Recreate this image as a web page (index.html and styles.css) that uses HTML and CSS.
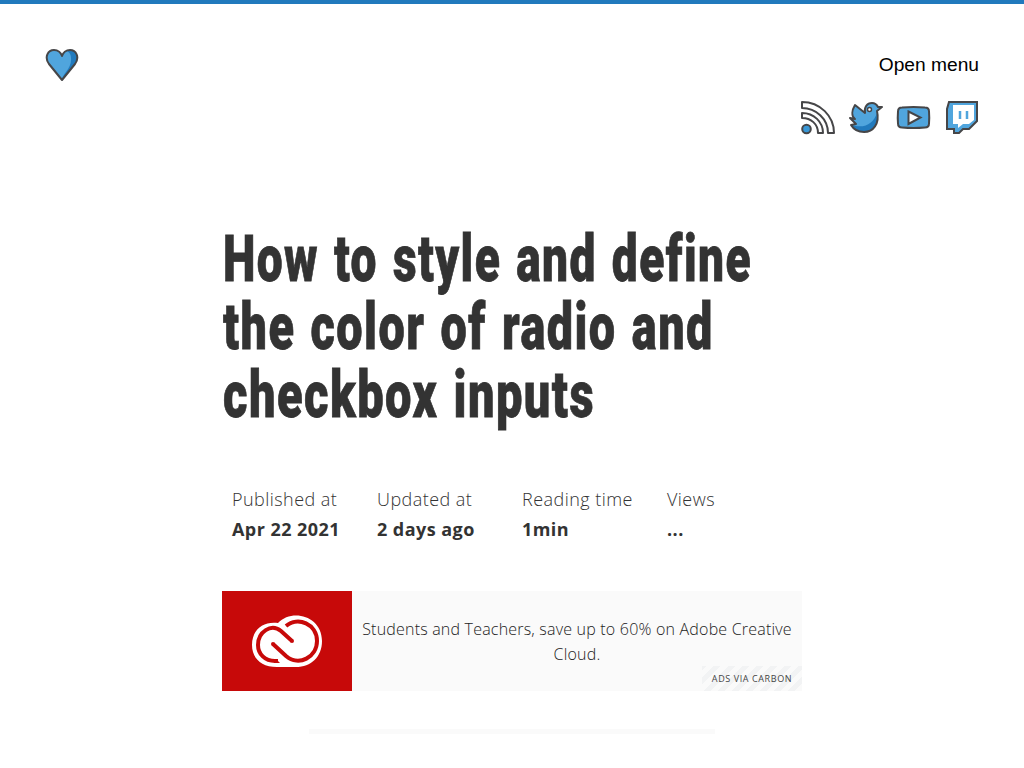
FILE: index.html
```html
<!DOCTYPE html>
<html lang="en">
<head>
<meta charset="utf-8">
<title>How to style and define the color of radio and checkbox inputs</title>
<link rel="stylesheet" href="styles.css">
</head>
<body>
<header class="header">
  <a class="logo" aria-label="Home"><svg width="34" height="34" viewBox="0 0 34 34"><path fill="#50a5dd" d="M17 32 4 16C-1 9 3 2 9 2c4 0 7 3 8 6 1-3 4-6 8-6 6 0 10 7 5 14Z"/><path fill="#217abd" d="M25 2c6 0 10 7 5 14L17 32c0-6 10-11 9-22q0-5-4-7Z"/><path fill="none" stroke="#464648" stroke-width="2" stroke-linejoin="round" d="M17 32 4 16C-1 9 3 2 9 2c4 0 7 3 8 6 1-3 4-6 8-6 6 0 10 7 5 14Z"/></svg></a>
  <div class="tools">
    <button class="menu">Open menu</button>
    <nav class="social">
      <a aria-label="RSS"><svg width="36" height="36" viewBox="0 0 36 36"><g fill="#fff" stroke="#464648" stroke-width="2" stroke-linejoin="round"><path d="M2 2C20 2 34 16 34 33H28C28 19 16 8 2 8Z"/><path d="M2 13C14 13 23 22 23 33H18C18 24 11 18 2 18Z" /><circle cx="6.500" cy="29" r="4.300" fill="#3998d7"/></g></svg></a>
      <a aria-label="Twitter"><svg width="36" height="36" viewBox="0 0 36 36"><path fill="#50a5dd" d="m7 5 10 8C16 7 19 3 24 3c3 0 5 2 6 4h4l-5 4c3 13-4 21-13 21-6 0-10-2-13-7l5-1-6-6 5 1C3 16 4 10 7 5Z"/><path fill="#217abd" d="M29 13c2 11-4 19-13 19-6 0-10-2-13-7 14 4 22-1 26-12Z"/><path fill="none" stroke="#464648" stroke-width="2" stroke-linejoin="round" d="m7 5 10 8C16 7 19 3 24 3c3 0 5 2 6 4h4l-5 4c3 13-4 21-13 21-6 0-10-2-13-7l5-1-6-6 5 1C3 16 4 10 7 5Z"/><circle cx="21.500" cy="9.500" r="2" fill="#fff" stroke="#464648" stroke-width="1.500"/></svg></a>
      <a aria-label="YouTube"><svg width="36" height="36" viewBox="0 0 36 36"><path fill="#50a5dd" stroke="#464648" stroke-width="2" d="M6 7.500q11.500-1 23 0 4 0 4 4 .5 6 0 12 0 4-4 4-11.500 1-23 0-4 0-4-4-.5-6 0-12 0-4 4-4Z"/><path fill="#fff" stroke="#464648" stroke-width="2" d="m12.500 11.500 12 6-12 6.500Z"/></svg></a>
      <a aria-label="Twitch"><svg width="36" height="36" viewBox="0 0 36 36"><path fill="#50a5dd" stroke="#464648" stroke-width="2" d="M5 2H33V21L25 29H19L15 33H10V29H3V9Z"/><path fill="#fff" d="M9 5H30V20L25 24H19L14 28V24H9Z"/><path stroke="#50a5dd" stroke-width="2.500" d="M16 11v8M23 11v8"/></svg></a>
    </nav>
  </div>
</header>
<main class="article">
  <h1 class="title"><span class="line line-a">How to style and define</span><span class="line line-b">the color of radio and</span><span class="line line-c">checkbox inputs</span></h1>
  <dl class="meta">
    <div><dt>Published at</dt><dd>Apr 22 2021</dd></div>
    <div><dt>Updated at</dt><dd>2 days ago</dd></div>
    <div><dt>Reading time</dt><dd>1min</dd></div>
    <div><dt>Views</dt><dd>...</dd></div>
  </dl>
  <aside class="ad">
    <div class="ad-logo"><svg width="70" height="52" viewBox="0 0 70 52"><path fill="#fff" d="M26 8C40-7 70 1 70 26 70 42 59 52 44 52H25C9 52 0 43 0 30 0 14 12 6 26 8Z"/><g fill="none" stroke="#c70909" stroke-width="4"><path d="M34 11C46 1 65 9 65 26 65 42 47 52 34 41L21 29"/><path d="M40 26 29 16C19 8 6 17 6 30c0 9 7 16 17 16h3"/></g><path fill="#c70909" d="M22 44h2L28 48H22Z"/><circle cx="21" cy="29" r="2" fill="#c70909"/><circle cx="40" cy="26" r="2" fill="#c70909"/></svg></div>
    <p class="ad-text">Students and Teachers, save up to 60% on Adobe Creative Cloud.</p>
    <span class="via">ADS VIA CARBON</span>
  </aside>
  <hr class="rule">
</main>
</body>
</html>
```
FILE: styles.css
```css
* { box-sizing: border-box; }
body { margin: 0; height: 768px; overflow: hidden; border-top: 4px solid #217abd; background: #fff; color: #333; font-family: "Open Sans", "Noto Sans", sans-serif; }
.header { display: flex; justify-content: space-between; padding: 44px 44px 0 45px; height: 221px; }
.header svg { display: block; }
.tools { display: flex; flex-direction: column; align-items: flex-end; }
.menu { border: 0; padding: 0; margin-right: 1px; background: none; color: #000; font: 19.2px/34px "Liberation Sans", Arial, sans-serif; }
.social { display: flex; gap: 12px; margin-top: 18px; }
.article { width: 580px; margin: 0 auto; }
.title { margin: 0; font: 900 65px/68px Roboto, sans-serif; letter-spacing: 2px; word-spacing: 3px; color: #333; -webkit-text-stroke: .8px #333; }
.line { display: block; width: max-content; white-space: nowrap; transform-origin: left; }
.line-a { transform: translateX(1px) scaleX(.709); }
.line-b { transform: translateX(1px) scaleX(.72); }
.line-c { transform: translateX(1px) scaleX(.724); }
.meta { display: flex; margin: 55px 0 0; padding-left: 10px; }
.meta div { flex: 0 0 145px; white-space: nowrap; }
.meta dt { font-size: 18px; line-height: 30px; letter-spacing: .45px; font-weight: 300; color: #333; }
.meta dd { margin: 0; font-size: 18px; line-height: 30px; letter-spacing: .45px; font-weight: 700; }
.meta div:last-child { flex-basis: 135px; }
.ad { display: flex; position: relative; height: 100px; margin-top: 47px; background: #fafafa; }
.ad-logo { display: flex; align-items: center; justify-content: center; width: 130px; background: #c70909; }
.ad-text { flex: 1; margin: 0; padding: 26px 0 0; text-align: center; font-size: 16px; line-height: 25px; letter-spacing: .2px; font-weight: 300; color: #222; }
.via { position: absolute; right: 0; bottom: 0; width: 100px; height: 25px; line-height: 25px; text-align: center; font-size: 9px; font-weight: 500; letter-spacing: .6px; white-space: nowrap; color: #444; background: repeating-linear-gradient(-45deg, #fafafa 0 5px, #f2f3f4 5px 10px); }
.rule { width: 406px; height: 5px; margin: 38px auto 0; border: 0; background: #fafafa; }
```
